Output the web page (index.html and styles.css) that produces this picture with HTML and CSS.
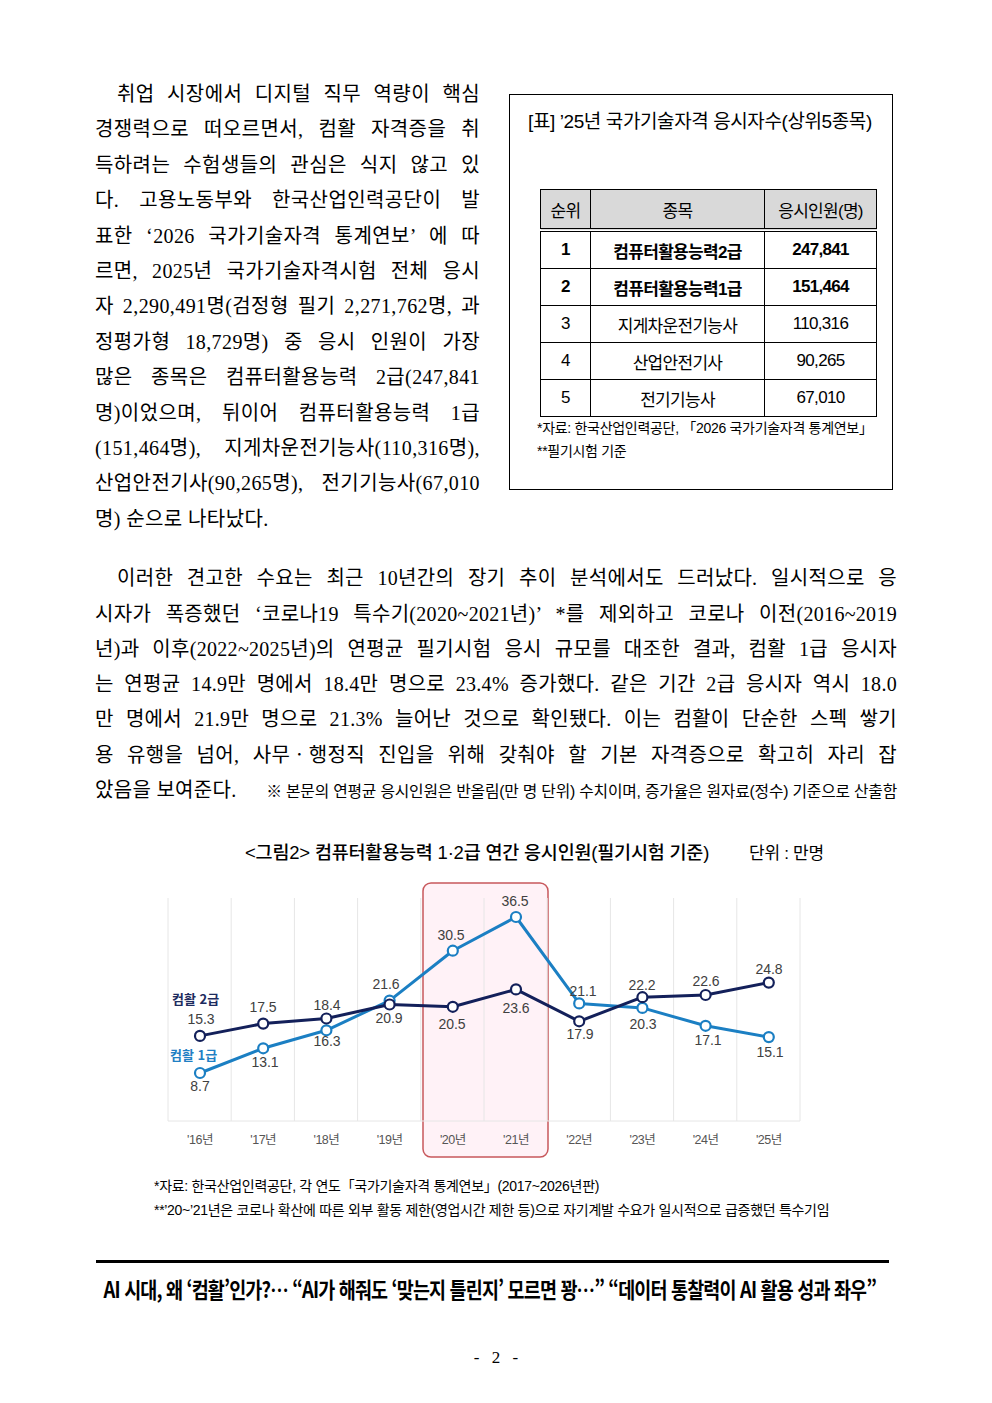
FILE: index.html
```html
<!DOCTYPE html>
<html lang="ko">
<head>
<meta charset="utf-8">
<title>컴퓨터활용능력 응시 현황</title>
<link rel="stylesheet" href="styles.css">
</head>
<body>
<div class="page">
  <section class="intro">
    <p class="col-text">
      <span class="ln indent">취업 시장에서 디지털 직무 역량이 핵심</span>
      <span class="ln">경쟁력으로 떠오르면서, 컴활 자격증을 취</span>
      <span class="ln">득하려는 수험생들의 관심은 식지 않고 있</span>
      <span class="ln">다. 고용노동부와 한국산업인력공단이 발</span>
      <span class="ln">표한 ‘2026 국가기술자격 통계연보’ 에 따</span>
      <span class="ln">르면, 2025년 국가기술자격시험 전체 응시</span>
      <span class="ln">자 2,290,491명(검정형 필기 2,271,762명, 과</span>
      <span class="ln">정평가형 18,729명) 중 응시 인원이 가장</span>
      <span class="ln">많은 종목은 컴퓨터활용능력 2급(247,841</span>
      <span class="ln">명)이었으며, 뒤이어 컴퓨터활용능력 1급</span>
      <span class="ln">(151,464명), 지게차운전기능사(110,316명),</span>
      <span class="ln">산업안전기사(90,265명), 전기기능사(67,010</span>
      <span class="ln last">명) 순으로 나타났다.</span>
    </p>
    <div class="tbox">
      <div class="tbox-title">[표] ’25년 국가기술자격 응시자수(상위5종목)</div>
      <table class="rank">
        <colgroup><col class="c1"><col class="c2"><col class="c3"></colgroup>
        <thead>
          <tr><th>순위</th><th>종목</th><th>응시인원(명)</th></tr>
        </thead>
        <tbody>
          <tr class="strong"><td>1</td><td>컴퓨터활용능력2급</td><td>247,841</td></tr>
          <tr class="strong"><td>2</td><td>컴퓨터활용능력1급</td><td>151,464</td></tr>
          <tr><td>3</td><td>지게차운전기능사</td><td>110,316</td></tr>
          <tr><td>4</td><td>산업안전기사</td><td>90,265</td></tr>
          <tr><td>5</td><td>전기기능사</td><td>67,010</td></tr>
        </tbody>
      </table>
      <div class="tnote">*자료: 한국산업인력공단, 「2026 국가기술자격 통계연보」</div>
      <div class="tnote">**필기시험 기준</div>
    </div>
  </section>

  <p class="para2">
    <span class="ln indent">이러한 견고한 수요는 최근 10년간의 장기 추이 분석에서도 드러났다. 일시적으로 응</span>
    <span class="ln">시자가 폭증했던 ‘코로나19 특수기(2020~2021년)’ *를 제외하고 코로나 이전(2016~2019</span>
    <span class="ln">년)과 이후(2022~2025년)의 연평균 필기시험 응시 규모를 대조한 결과, 컴활 1급 응시자</span>
    <span class="ln">는 연평균 14.9만 명에서 18.4만 명으로 23.4% 증가했다. 같은 기간 2급 응시자 역시 18.0</span>
    <span class="ln">만 명에서 21.9만 명으로 21.3% 늘어난 것으로 확인됐다. 이는 컴활이 단순한 스펙 쌓기</span>
    <span class="ln">용 유행을 넘어, 사무ㆍ행정직 진입을 위해 갖춰야 할 기본 자격증으로 확고히 자리 잡</span>
    <span class="ln last split"><span>았음을 보여준다.</span><span class="note">※ 본문의 연평균 응시인원은 반올림(만 명 단위) 수치이며, 증가율은 원자료(정수) 기준으로 산출함</span></span>
  </p>

  <div class="fig-head">
    <span class="fig-title">&lt;그림2&gt; 컴퓨터활용능력 1·2급 연간 응시인원(필기시험 기준)</span>
    <span class="fig-unit">단위 : 만명</span>
  </div>

  <svg class="chart" width="802" height="292" viewBox="95 870 802 292" xmlns="http://www.w3.org/2000/svg">
    <rect x="423" y="881" width="125" height="274" rx="8" ry="8" fill="#fff2f7" stroke="#c8585c" stroke-width="1.5"/>
    <g stroke="#e6e6e6" stroke-width="1">
      <line x1="168" y1="896" x2="168" y2="1119"/>
      <line x1="231.2" y1="896" x2="231.2" y2="1119"/>
      <line x1="294.4" y1="896" x2="294.4" y2="1119"/>
      <line x1="357.6" y1="896" x2="357.6" y2="1119"/>
      <line x1="420.8" y1="896" x2="420.8" y2="1119"/>
      <line x1="484" y1="896" x2="484" y2="1119"/>
      <line x1="547.2" y1="896" x2="547.2" y2="1119"/>
      <line x1="610.4" y1="896" x2="610.4" y2="1119"/>
      <line x1="673.6" y1="896" x2="673.6" y2="1119"/>
      <line x1="736.8" y1="896" x2="736.8" y2="1119"/>
      <line x1="800" y1="896" x2="800" y2="1119"/>
      <line x1="168" y1="1119" x2="800" y2="1119"/>
    </g>

    <polyline fill="none" stroke="#1b7fc3" stroke-width="3" stroke-linejoin="round"
      points="200,1071 263.2,1046.3 326.4,1028.3 389.6,998.6 452.8,948.7 516,915 579.2,1001.4 642.4,1005.9 705.6,1023.8 768.8,1035.1"/>
    <g fill="#fff" stroke="#1b7fc3" stroke-width="2.2">
      <circle cx="200" cy="1071" r="5"/>
      <circle cx="263.2" cy="1046.3" r="5"/>
      <circle cx="326.4" cy="1028.3" r="5"/>
      <circle cx="389.6" cy="998.6" r="5"/>
      <circle cx="452.8" cy="948.7" r="5"/>
      <circle cx="516" cy="915" r="5"/>
      <circle cx="579.2" cy="1001.4" r="5"/>
      <circle cx="642.4" cy="1005.9" r="5"/>
      <circle cx="705.6" cy="1023.8" r="5"/>
      <circle cx="768.8" cy="1035.1" r="5"/>
    </g>

    <polyline fill="none" stroke="#13205a" stroke-width="3" stroke-linejoin="round"
      points="200,1033.9 263.2,1021.6 326.4,1016.5 389.6,1002.5 452.8,1004.8 516,987.4 579.2,1019.3 642.4,995.2 705.6,993 768.8,980.6"/>
    <g fill="#fff" stroke="#13205a" stroke-width="2.2">
      <circle cx="200" cy="1033.9" r="5"/>
      <circle cx="263.2" cy="1021.6" r="5"/>
      <circle cx="326.4" cy="1016.5" r="5"/>
      <circle cx="389.6" cy="1002.5" r="5"/>
      <circle cx="452.8" cy="1004.8" r="5"/>
      <circle cx="516" cy="987.4" r="5"/>
      <circle cx="579.2" cy="1019.3" r="5"/>
      <circle cx="642.4" cy="995.2" r="5"/>
      <circle cx="705.6" cy="993" r="5"/>
      <circle cx="768.8" cy="980.6" r="5"/>
    </g>

    <g class="val" text-anchor="middle" dominant-baseline="central">
      <text x="201" y="1017">15.3</text>
      <text x="263" y="1005">17.5</text>
      <text x="327" y="1003">18.4</text>
      <text x="389" y="1016">20.9</text>
      <text x="452" y="1022">20.5</text>
      <text x="516" y="1006">23.6</text>
      <text x="580" y="1032">17.9</text>
      <text x="642" y="983">22.2</text>
      <text x="706" y="979">22.6</text>
      <text x="769" y="967">24.8</text>

      <text x="200" y="1084">8.7</text>
      <text x="265" y="1060">13.1</text>
      <text x="327" y="1039">16.3</text>
      <text x="386" y="982">21.6</text>
      <text x="451" y="933">30.5</text>
      <text x="515" y="899">36.5</text>
      <text x="583" y="989">21.1</text>
      <text x="643" y="1022">20.3</text>
      <text x="708" y="1038">17.1</text>
      <text x="770" y="1050">15.1</text>
    </g>

    <text class="series s2" x="172" y="996" dominant-baseline="central">컴활 2급</text>
    <text class="series s1" x="170" y="1052" dominant-baseline="central">컴활 1급</text>

    <g class="axis" text-anchor="middle" dominant-baseline="central">
      <text x="200" y="1138">'16년</text>
      <text x="263.2" y="1138">'17년</text>
      <text x="326.4" y="1138">'18년</text>
      <text x="389.6" y="1138">'19년</text>
      <text x="452.8" y="1138">'20년</text>
      <text x="516" y="1138">'21년</text>
      <text x="579.2" y="1138">'22년</text>
      <text x="642.4" y="1138">'23년</text>
      <text x="705.6" y="1138">'24년</text>
      <text x="768.8" y="1138">'25년</text>
    </g>
  </svg>

  <div class="fig-notes">
    <div>*자료: 한국산업인력공단, 각 연도「국가기술자격 통계연보」(2017~2026년판)</div>
    <div>**’20~’21년은 코로나 확산에 따른 외부 활동 제한(영업시간 제한 등)으로 자기계발 수요가 일시적으로 급증했던 특수기임</div>
  </div>

  <hr class="rule">

  <div class="headline"><span>AI 시대, 왜 ‘컴활’인가?… “AI가 해줘도 ‘맞는지 틀린지’ 모르면 꽝…” “데이터 통찰력이 AI 활용 성과 좌우”</span></div>

  <div class="pageno">- 2 -</div>
</div>
</body>
</html>
```
FILE: styles.css
```css
html, body {
  margin: 0;
  padding: 0;
  background: #fff;
}

.page {
  width: 992px;
  height: 1403px;
  box-sizing: border-box;
  padding: 77px 95px 0 95px;
  color: #000;
  font-family: "Liberation Serif", "Noto Sans CJK KR", serif;
}

.ln {
  display: block;
  text-align: justify;
  text-align-last: justify;
}
.ln.indent { text-indent: 22px; }
.ln.last { text-align-last: left; }

.intro {
  display: flex;
  align-items: flex-start;
  gap: 29px;
}

.col-text {
  width: 385px;
  margin: 0;
  font-size: 20px;
  line-height: 35.4px;
  letter-spacing: 0.4px;
  flex: none;
}

/* table box */
.tbox {
  width: 384px;
  height: 396px;
  margin-top: 17px;
  box-sizing: border-box;
  border: 1px solid #000;
  padding: 13px 0 0 18px;
  font-family: "Liberation Sans", "Noto Sans CJK KR", sans-serif;
  flex: none;
}
.tbox-title {
  font-size: 19px;
  line-height: 28px;
  letter-spacing: -0.4px;
  white-space: nowrap;
}
.rank {
  margin: 53px 0 0 12px;
  width: 336px;
  border-collapse: collapse;
  table-layout: fixed;
  font-size: 17px;
  letter-spacing: -0.7px;
}
.rank col.c1 { width: 50px; }
.rank col.c2 { width: 174px; }
.rank col.c3 { width: 112px; }
.rank th, .rank td {
  border: 1px solid #000;
  text-align: center;
  padding: 0;
  white-space: nowrap;
}
.rank th {
  height: 38px;
  background: #d9d9d9;
  font-weight: 400;
  border-bottom: 4px double #000;
}
.rank td { height: 36px; }
.rank tr.strong td { font-weight: 700; }
.tnote {
  margin-left: 9px;
  font-size: 14px;
  line-height: 23px;
  letter-spacing: -0.3px;
  white-space: nowrap;
}

/* second paragraph */
.para2 {
  margin: 24px 0 0 0;
  font-size: 20px;
  line-height: 35.3px;
  letter-spacing: 0.3px;
}
.ln.split {
  display: flex;
  justify-content: space-between;
  align-items: baseline;
}
.note {
  font-family: "Liberation Sans", "Noto Sans CJK KR", sans-serif;
  font-size: 15.8px;
  letter-spacing: -0.2px;
}

/* figure */
.fig-head {
  display: flex;
  align-items: baseline;
  gap: 40px;
  margin: 32px 0 0 150px;
  line-height: 24px;
  font-family: "Liberation Sans", "Noto Sans CJK KR", sans-serif;
}
.fig-title {
  font-size: 18.5px;
  font-weight: 500;
  letter-spacing: -0.2px;
}
.fig-unit {
  font-size: 17px;
  letter-spacing: -0.3px;
}

.chart {
  display: block;
  margin-top: 6px;
}
.chart .val {
  font-family: "Liberation Sans", sans-serif;
  font-size: 14px;
  fill: #404040;
}
.chart .series {
  font-family: "Noto Sans CJK KR", sans-serif;
  font-size: 13px;
  font-weight: 700;
}
.chart .s2 { fill: #1d2b5e; }
.chart .s1 { fill: #1f80c4; }
.chart .axis {
  font-family: "Liberation Sans", "Noto Sans CJK KR", sans-serif;
  font-size: 12.5px;
  fill: #555;
  letter-spacing: -0.5px;
}

.fig-notes {
  margin: 10px 0 0 59px;
  font-family: "Liberation Sans", "Noto Sans CJK KR", sans-serif;
  font-size: 14px;
  line-height: 24px;
  letter-spacing: -0.3px;
  white-space: nowrap;
}

.rule {
  margin: 38px 8px 0 1px;
  height: 3px;
  border: 0;
  background: #000;
}

.headline {
  margin: 10px 12px 0 0;
  display: flex;
  justify-content: center;
  line-height: 30px;
  white-space: nowrap;
  font-family: "Noto Sans CJK KR", sans-serif;
  font-size: 22px;
  font-weight: 700;
}
.headline span {
  flex: none;
  transform: scaleX(0.84);
  letter-spacing: -1px;
}

.pageno {
  margin-top: 45px;
  text-align: center;
  font-family: "Liberation Serif", serif;
  font-size: 17px;
  line-height: 20px;
  word-spacing: 8px;
}
```
